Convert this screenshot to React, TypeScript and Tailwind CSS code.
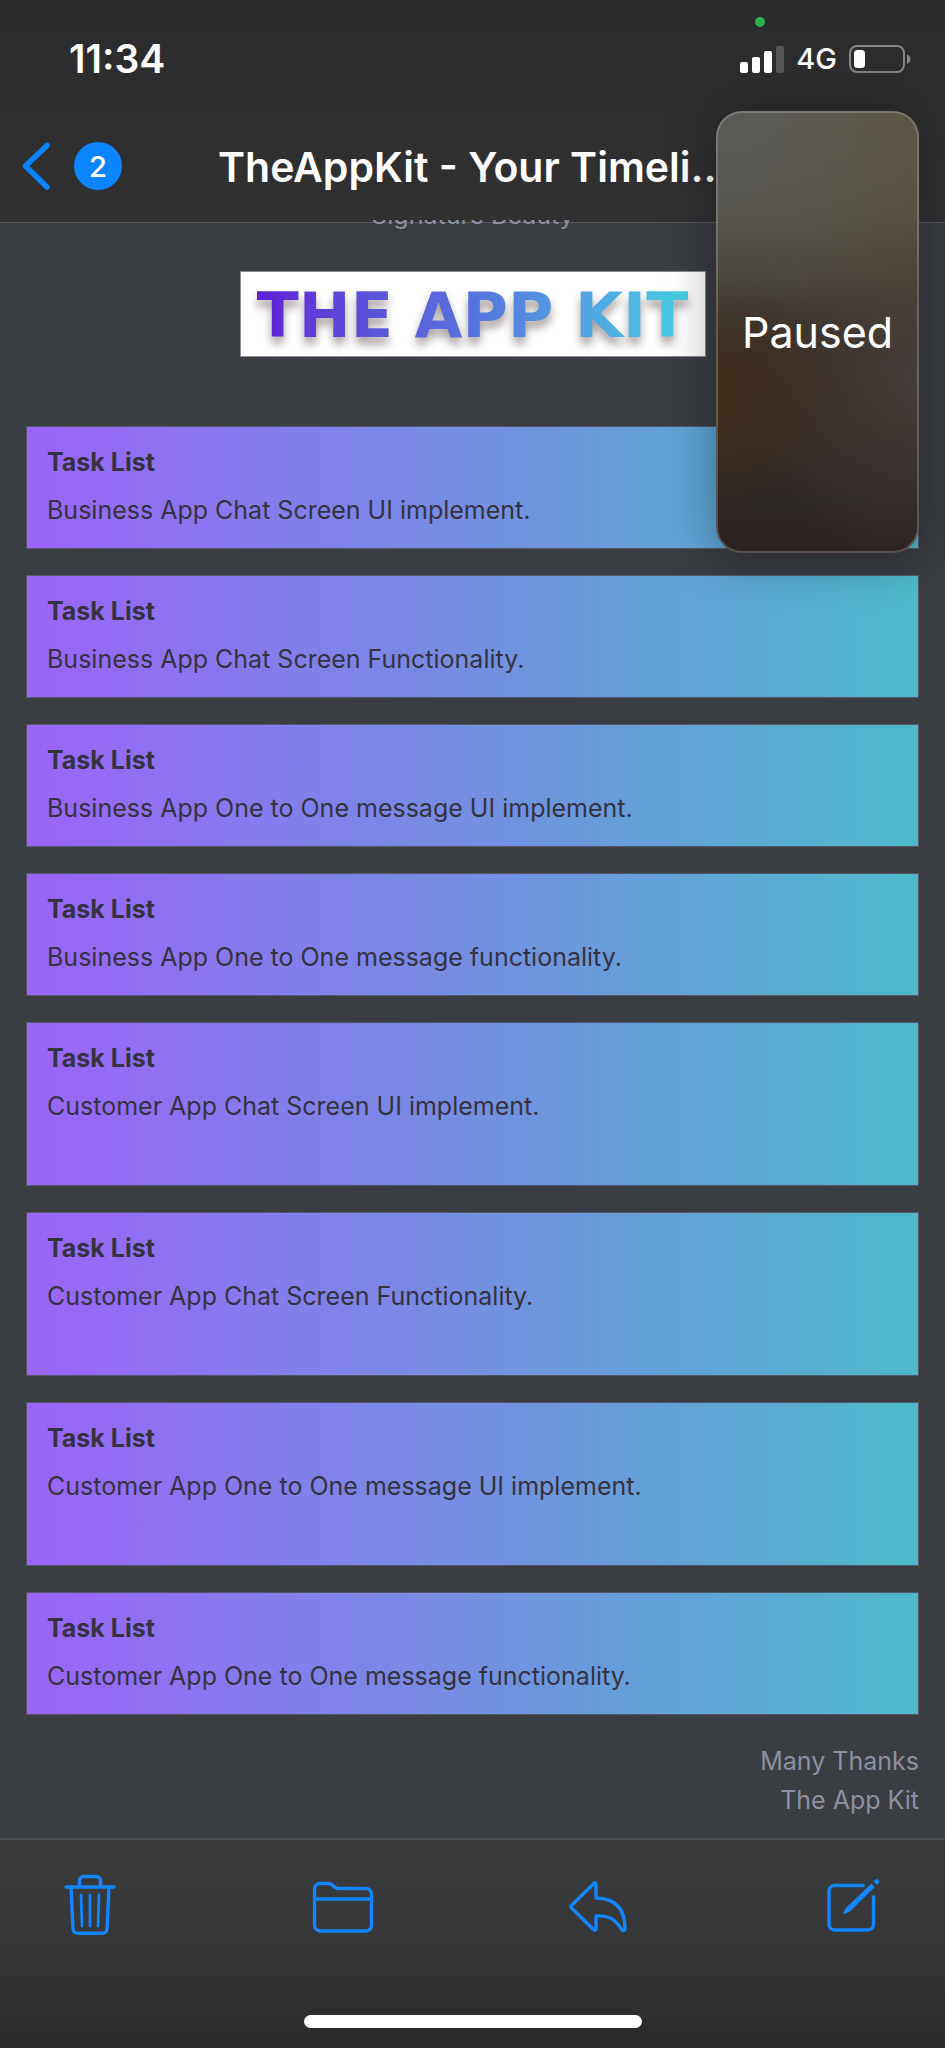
type Task = { text: string; tall?: boolean };

const tasks: Task[] = [
  { text: "Business App Chat Screen UI implement." },
  { text: "Business App Chat Screen Functionality." },
  { text: "Business App One to One message UI implement." },
  { text: "Business App One to One message functionality." },
  { text: "Customer App Chat Screen UI implement.", tall: true },
  { text: "Customer App Chat Screen Functionality.", tall: true },
  { text: "Customer App One to One message UI implement.", tall: true },
  { text: "Customer App One to One message functionality." },
];

function StatusBar() {
  return (
    <div className="relative flex h-[110px] items-center justify-between pt-[7px] pr-[34px] pl-[69px] text-white">
      <span className="absolute top-[17px] right-[180px] size-[10px] rounded-full bg-[#30b14e]" />
      <span className="text-[39px] leading-[44px] font-semibold">11:34</span>
      <div className="flex items-center gap-3">
        <svg width="44" height="28" viewBox="0 0 44 28" fill="#fff" aria-hidden="true">
          <rect x="0" y="17" width="8" height="11" rx="2" />
          <rect x="12" y="12" width="8" height="16" rx="2" />
          <rect x="24" y="6" width="8" height="22" rx="2" />
          <rect x="36" y="1" width="8" height="27" rx="2" fill="#565658" />
        </svg>
        <span className="text-[29px] leading-[36px] font-medium">4G</span>
        <svg width="62" height="28" viewBox="0 0 62 28" aria-hidden="true">
          <rect x="1" y="1" width="54" height="26" rx="7" fill="none" stroke="#858587" strokeWidth="2" />
          <rect x="5" y="5" width="11" height="18" rx="3.500" fill="#fff" />
          <path d="M58 9.500c4.500 1 4.500 8.500 0 9.500z" fill="#858587" />
        </svg>
      </div>
    </div>
  );
}

function NavBar() {
  return (
    <nav className="flex h-[110px] items-start pt-8 pl-[22px]">
      <button type="button" aria-label="Back" className="flex items-center gap-6">
        <svg width="28" height="48" viewBox="0 0 28 48" fill="none" stroke="#0a84ff" strokeWidth="5.500" strokeLinecap="round" strokeLinejoin="round" aria-hidden="true">
          <path d="M25 3.500 3.500 24 25 45" />
        </svg>
        <span className="flex size-12 items-center justify-center rounded-full bg-[#0a84ff] text-[29px] leading-none font-medium text-white">
          2
        </span>
      </button>
      <h1 className="ml-24 text-[41px] leading-[50px] font-semibold whitespace-nowrap text-white">
        TheAppKit - Your Timeli…
      </h1>
    </nav>
  );
}

function TaskCard({ task }: { task: Task }) {
  return (
    <li
      className={`flex flex-col gap-2 border border-[#55586a] bg-linear-to-r/srgb from-[#9a64f8] to-[#4dbacb] px-5 pt-[15px] text-[25px] leading-[40px] text-[#35323f] ${
        task.tall ? "pb-[59px]" : "pb-[18px]"
      }`}
    >
      <h2 className="font-bold">Task List</h2>
      <p>{task.text}</p>
    </li>
  );
}

function Toolbar() {
  const stroke = {
    fill: "none",
    stroke: "#1385ff",
    strokeWidth: 3.4,
    strokeLinecap: "round" as const,
    strokeLinejoin: "round" as const,
    "aria-hidden": true,
  };
  return (
    <footer className="flex h-[210px] flex-col justify-between border-t-2 border-[#4a4c51] bg-linear-to-b from-[#3a3b3c] via-[#363738] to-[#2a2a2b] pt-[34px] pb-5">
      <div className="flex items-center justify-between px-[64px]">
        <button type="button" aria-label="Delete">
          <svg width="52" height="62" viewBox="0 0 52 62" {...stroke}>
            <path d="M2 13h48M15.500 13V6.500a4 4 0 0 1 4-4h13a4 4 0 0 1 4 4V13" />
            <path d="M7 13l2 42a4.500 4.500 0 0 0 4.500 4.300h25A4.500 4.500 0 0 0 43 55l2-42" />
            <path d="M17 21l1 31M26 21v31M35 21l-1 31" strokeWidth="2.800" />
          </svg>
        </button>
        <button type="button" aria-label="Move to folder">
          <svg width="62" height="62" viewBox="0 0 62 62" {...stroke}>
            <path d="M2.500 15a5.500 5.500 0 0 1 5.500-5.500h8.500c2 0 3 .6 4.500 2l2 1.800c1 .9 2 1.200 3.500 1.200H54a5.500 5.500 0 0 1 5.500 5.500v31.500a5.500 5.500 0 0 1-5.500 5.500H8a5.500 5.500 0 0 1-5.500-5.500zM2.500 25h57" />
          </svg>
        </button>
        <button type="button" aria-label="Reply">
          <svg width="62" height="62" viewBox="0 0 62 62" {...stroke}>
            <path d="M27 10.500c0-1.500-1.200-1.900-2.300-.9L2.800 31.200c-1 1-1 1.900 0 2.900l21.900 21.600c1.100 1 2.300.5 2.300-.9V42c12-.8 19 2.500 25.500 13.300 1.200 2 3.500 1.700 3.500-.7C56 36 47.500 24.500 27 24z" />
          </svg>
        </button>
        <button type="button" aria-label="Compose">
          <svg width="54" height="62" viewBox="0 0 54 62" {...stroke}>
            <path d="M37.500 11.500H7.500a5.500 5.500 0 0 0-5.500 5.500v33.500a5.500 5.500 0 0 0 5.500 5.500H41a5.500 5.500 0 0 0 5.500-5.500V21.500" strokeLinecap="butt" />
            <path d="M44.500 9.500l3.400 3.400-25 24.700-5.400 2.400c-.8.300-1.300-.1-1-.9l2.300-5zM48 6a2.500 2.500 0 0 1 3.600 3.600l-1.500 1.500-3.600-3.600z" fill="#1385ff" stroke="none" />
          </svg>
        </button>
      </div>
      <div className="h-[13px] w-[338px] self-center rounded-full bg-white" />
    </footer>
  );
}

export default function App() {
  return (
    <div className="relative flex min-h-screen flex-col overflow-hidden bg-[#3a3d42] font-['Inter',sans-serif]">
      <header className="relative z-10 bg-linear-to-b from-[#2b2b2d] to-[#313132]">
        <StatusBar />
        <NavBar />
      </header>

      <main className="flex flex-1 flex-col border-t-2 border-[#313132]">
        <div className="flex flex-col border-t border-[#56585c] px-[26px]">
          <p className="-mt-[27px] text-center text-[25px] leading-[39px] text-[#8e90a0]">Signature Beauty</p>
          <div className="mt-9 flex h-[86px] w-[466px] items-center justify-center self-center border border-[#8b8d90] bg-white pt-1">
            <span className="bg-linear-to-r from-[#5f1dd6] via-[#5673dd] to-[#45cfe2] bg-clip-text font-['DejaVu_Sans',sans-serif] text-[62px] leading-[76px] font-bold whitespace-nowrap text-transparent drop-shadow-[0_7px_5px_rgba(60,40,40,0.45)]">
              THE APP KIT
            </span>
          </div>
          <ul className="mt-[69px] flex flex-col gap-[26px]">
            {tasks.map((task) => (
              <TaskCard key={task.text} task={task} />
            ))}
          </ul>
          <p className="mt-[27px] text-right text-[25px] leading-[39px] text-[#8e90a0]">
            Many Thanks
            <br />
            The App Kit
          </p>
        </div>
      </main>

      <Toolbar />

      <aside className="absolute top-[111px] right-[26px] z-20 flex h-[442px] w-[203px] items-center justify-center rounded-[26px] border-2 border-white/20 bg-[radial-gradient(circle_at_0%_0%,#5a5a58_0%,rgba(90,90,88,0)_50%),radial-gradient(circle_at_100%_0%,#5d5340_0%,rgba(93,83,64,0)_50%),radial-gradient(circle_at_0%_64%,#40301e_0%,rgba(64,48,30,0)_34%),radial-gradient(circle_at_100%_60%,#453d3a_0%,rgba(69,61,58,0)_55%),linear-gradient(180deg,#5c5a4b_0%,#4f4c40_25%,#3a322b_45%,#372a22_62%,#2c2624_88%,#2d2422_100%)] bg-origin-border shadow-[0_4px_50px_0_rgba(10,12,18,0.4)]">
        <span className="text-[43px] leading-[52px] text-white">Paused</span>
      </aside>
    </div>
  );
}
